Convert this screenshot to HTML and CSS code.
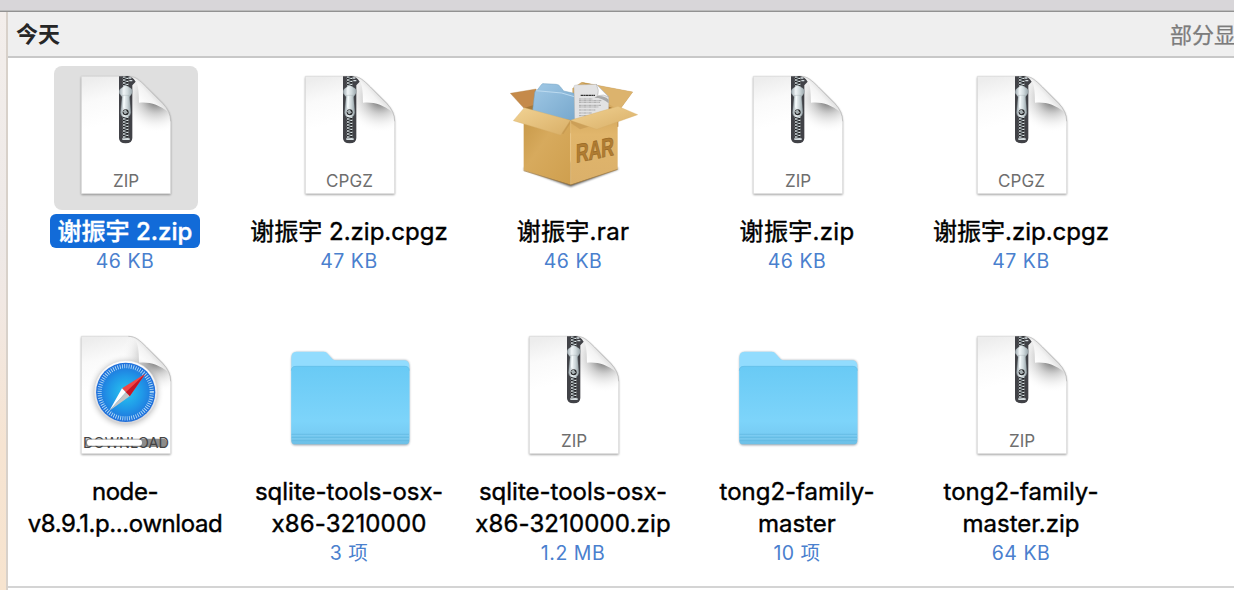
FILE: index.html
```html
<!DOCTYPE html>
<html lang="zh-CN">
<head>
<meta charset="utf-8">
<title>今天</title>
<link rel="stylesheet" href="styles.css">
</head>
<body>
<svg class="defs" aria-hidden="true">
  <defs>
    <linearGradient id="page" x1=".25" y1="0" x2=".45" y2="1"><stop offset="0" stop-color="#ededed"/><stop offset=".18" stop-color="#fafafa"/><stop offset=".4" stop-color="#fff"/></linearGradient>
    <radialGradient id="foldShade" gradientUnits="userSpaceOnUse" cx="318" cy="108" r="105"><stop offset="0" stop-color="#777"/><stop offset=".2" stop-color="#919191"/><stop offset=".45" stop-color="#c4c4c4" stop-opacity=".8"/><stop offset="1" stop-color="#fff" stop-opacity="0"/></radialGradient>
    <linearGradient id="curl" gradientUnits="userSpaceOnUse" x1="262" y1="115" x2="306" y2="76"><stop offset="0" stop-color="#fff"/><stop offset=".6" stop-color="#f3f3f3"/><stop offset="1" stop-color="#d5d5d5"/></linearGradient>
    <linearGradient id="metal" x1="0" x2="1"><stop offset="0" stop-color="#9aa6ac"/><stop offset=".35" stop-color="#f0f5f7"/><stop offset=".65" stop-color="#cfd9dc"/><stop offset="1" stop-color="#98a4a9"/></linearGradient>
    <pattern id="teeth" width="18" height="9" patternUnits="userSpaceOnUse" x="218" y="42"><path d="M0 1h8v4H0zM10 5h8v4h-8z" fill="#dce4e6"/><path d="M7 2h4v2H7zM7 6h4v2H7z" fill="#94a3a8"/></pattern>
    <linearGradient id="folderFront" x2="0" y2="1"><stop offset="0" stop-color="#69caf5"/><stop offset=".7" stop-color="#7dd4fa"/><stop offset=".86" stop-color="#78cdf4"/><stop offset="1" stop-color="#6dbfe6"/></linearGradient>
    <radialGradient id="compass" cx=".5" cy=".5" r=".55"><stop offset="0" stop-color="#27c5ef"/><stop offset=".5" stop-color="#2099e8"/><stop offset="1" stop-color="#2065d8"/></radialGradient>
    <linearGradient id="rim" x2="0" y2="1"><stop offset="0" stop-color="#fff"/><stop offset="1" stop-color="#d5d5d8"/></linearGradient>
    <linearGradient id="boxLeft" x2="1" y2="1"><stop offset="0" stop-color="#c79848"/><stop offset=".4" stop-color="#d7aa5d"/><stop offset="1" stop-color="#cf9f4e"/></linearGradient>
    <linearGradient id="boxRight" x2="0" y2="1"><stop offset="0" stop-color="#d3a65b"/><stop offset=".3" stop-color="#e1b66c"/><stop offset="1" stop-color="#dbb06a"/></linearGradient>
    <linearGradient id="flap" x2="1" y2="1"><stop offset="0" stop-color="#f1d293"/><stop offset="1" stop-color="#d9af67"/></linearGradient>
    <linearGradient id="blueFile" x2="1" y2="1"><stop offset="0" stop-color="#a1c9e6"/><stop offset="1" stop-color="#76a7cc"/></linearGradient>
    <filter id="soft" x="-20%" y="-20%" width="140%" height="140%"><feGaussianBlur stdDeviation="3"/></filter>

    <symbol id="doc" viewBox="0 0 144 144">
      <g transform="translate(-4 -4) scale(.33333)">
        <path d="M94 46H235C258 46 268 57 290 79L338 126Q362 151 362 180V398H94Z" fill="#000" opacity=".4" filter="url(#soft)"/>
        <path d="M94 43H235C256 43 270 56 289 75L338 124Q362 149 362 178V395H94Z" fill="url(#page)" stroke="#d3d3d3" stroke-width="1.5"/>
        <path d="M235 43C256 43 270 56 289 75L338 124Q361 149 361 178V225H220V43Z" fill="url(#foldShade)"/>
        <path d="M235 43C259 45 267 65 267 122C300 119 326 128 355 150Q350 136 338 124L289 75C270 56 256 43 235 43Z" fill="url(#curl)"/>
        <path d="M235 43C256 43 270 56 289 75L338 124Q362 149 362 178" fill="none" stroke="#b5b5b5" stroke-width="2"/>
      </g>
    </symbol>
    <symbol id="zipper" viewBox="0 0 144 144">
      <g transform="translate(-4 -4) scale(.33333)">
        <path d="M207 43H235Q247 44 257 59L247 70V228Q247 244 227 244Q207 244 207 228Z" fill="#414247"/>
        <rect x="218" y="43" width="18" height="188" fill="#202124"/>
        <rect x="218" y="43" width="18" height="188" fill="url(#teeth)"/>
        <path d="M236 46h8v4h-8zM238 54h9v4h-9zM217 229h22v5h-22z" fill="#d4dcdf"/>
        <path d="M218 76Q227 65 237 76Q250 81 246 94Q241 102 236 106H218Q214 102 208 94Q205 82 218 76Z" fill="url(#metal)" stroke="#9aa6ab"/>
        <path d="M217 100H238L242 151Q241 166 227 166Q212 166 212 151Z" fill="url(#metal)" stroke="#9aa6ab"/>
        <path d="M223 103L221 137" stroke="#f8ffff" stroke-width="3"/>
        <circle cx="227" cy="151" r="9" fill="#27292b"/>
        <path d="M220 148l7-4 4 7-6 5zM229 154l5-4" fill="#a3afb2" stroke="#dce3e5" stroke-width="1.5"/>
      </g>
    </symbol>
    <symbol id="zip" viewBox="0 0 144 144"><use href="#doc"/><use href="#zipper"/><text x="72" y="120.5" class="kind" textLength="26">ZIP</text></symbol>
    <symbol id="cpgz" viewBox="0 0 144 144"><use href="#doc"/><use href="#zipper"/><text x="71.5" y="120.5" class="kind" textLength="47">CPGZ</text></symbol>
    <symbol id="folder" viewBox="0 0 144 144">
      <g transform="translate(2 14) scale(.33333)">
        <path d="M35 55Q35 37 50 37H131Q139 37 144 44L160 61H376Q388 62 388 80V304Q388 316 376 316H46Q35 316 35 304Z" fill="#234" opacity=".45" filter="url(#soft)"/>
        <path d="M34 53Q34 35 49 35H131Q139 35 144 42L157 57Q160 61 168 61H374Q388 62 388 79V298H34Z" fill="#92dcfe"/>
        <path d="M34 92Q34 78 48 78H374Q388 78 388 92V302Q388 313 376 313H45Q34 313 34 302Z" fill="url(#folderFront)"/>
        <path d="M34 92Q34 79 48 79H374Q388 79 388 92" fill="none" stroke="#65bde5" stroke-width="2"/>
        <path d="M35 283H387M35 292H387M35 302H387" stroke="#5eb4dc" stroke-width="2"/>
        <path d="M35 286H387M35 296H387" stroke="#83cdef" stroke-width="1.5"/>
      </g>
    </symbol>
  </defs>
</svg>
<div class="toolbar"></div>
<div class="window">
  <div class="edge"></div>
  <main class="pane">
    <header class="group"><h1>今天</h1><span class="more">部分显</span></header>
    <section class="files">
      <article class="file selected"><svg class="icon"><use href="#zip"/></svg><div class="name"><span>谢振宇 2.zip</span></div><div class="info">46 KB</div></article>
      <article class="file"><svg class="icon"><use href="#cpgz"/></svg><div class="name"><span>谢振宇 2.zip.cpgz</span></div><div class="info">47 KB</div></article>
      <article class="file">
        <svg class="icon" viewBox="0 0 144 144"><g transform="translate(-2 4) scale(.33333)">
          <path d="M70 298L212 350L356 297L320 275H100Z" fill="#000" opacity=".65" filter="url(#soft)"/>
          <path d="M31 70L108 57L125 115H72Z" fill="#c58a4a" stroke="#b18043"/>
          <path d="M245 37L398 66L357 122H218V55Z" fill="#d5aa61" stroke="#b58c49"/>
          <path d="M278 44L398 66L357 121L315 95Z" fill="#dcb36d"/>
          <path d="M245 37L290 45L285 60Z" fill="#c3984f"/>
          <path d="M72 114L218 70L355 121V170L212 190L72 155Z" fill="#a77837"/>
          <path d="M104 69Q105 60 112 60L124 44Q127 40 133 41L169 43Q177 44 181 50L191 63L222 70L228 154L97 130Z" fill="url(#blueFile)" stroke="#6f9fc0" stroke-width="1.5"/>
          <path d="M108 62L185 69L223 80" fill="none" stroke="#bddbf0" stroke-width="3"/>
          <path d="M222 50Q222 45 228 45L289 43L326 80V139L280 160L224 147Z" fill="#e2e2e3" stroke="#aaa"/>
          <path d="M289 43Q299 61 293 77Q311 71 326 81Z" fill="#fff" stroke="#888"/>
          <path d="M292 78Q313 76 326 89V100Q308 83 283 83Z" fill="#a8a8a8"/>
          <path d="M242 76H285" stroke="#333" stroke-width="4" stroke-dasharray="7 1"/>
          <path d="M237 87H278M237 92H304M237 97H300M237 106H303M237 111H295M237 120H286M237 129H275M237 137H286" stroke="#8b8b8b" stroke-width="2" stroke-dasharray="8 2 4 1"/>
          <path d="M71 139L212 154V344L71 301Z" fill="url(#boxLeft)"/>
          <path d="M212 154L353 128V298L212 344Z" fill="url(#boxRight)"/>
          <path d="M71 148L190 192L212 159L240 178L353 145V127L212 150L71 126Z" fill="#b18441" opacity=".35"/>
          <path d="M73 113L211 151L182 195L40 152Z" fill="url(#flap)" stroke="#d5ad68"/>
          <path d="M211 151L354 109L413 134L290 178Z" fill="url(#flap)" stroke="#d3ac67"/>
          <path d="M212 153V343" stroke="#edc989" stroke-width="2"/>
          <path d="M71 302L212 345L353 298" fill="none" stroke="#a77b38" stroke-width="2"/>
          <text class="rar" transform="matrix(1 -.2 0 1.15 228 278)" textLength="114" lengthAdjust="spacingAndGlyphs">RAR</text>
        </g></svg>
        <div class="name"><span class="wide">谢振宇.rar</span></div><div class="info">46 KB</div></article>
      <article class="file"><svg class="icon"><use href="#zip"/></svg><div class="name"><span class="wide">谢振宇.zip</span></div><div class="info">46 KB</div></article>
      <article class="file"><svg class="icon"><use href="#cpgz"/></svg><div class="name"><span>谢振宇.zip.cpgz</span></div><div class="info">47 KB</div></article>

      <article class="file">
        <svg class="icon" viewBox="0 0 144 144"><use href="#doc"/>
          <circle cx="71.7" cy="67" r="31.5" fill="#000" opacity=".3" filter="url(#soft)"/>
          <circle cx="71.7" cy="66.3" r="31.7" fill="url(#rim)" stroke="#d4d4d6" stroke-width=".5"/>
          <circle cx="71.7" cy="66.3" r="29.6" fill="url(#compass)"/>
          <circle cx="71.7" cy="66.3" r="26.1" fill="none" stroke="#d4effc" stroke-width="4.2" stroke-dasharray=".85 1.428" opacity=".85"/>
          <path d="M91.3 47.7L68 62.2L75.7 70.3Z" fill="#f04747"/><path d="M91.3 47.7L71.8 66.2L75.7 70.3Z" fill="#c51624"/>
          <path d="M55.3 84.7L68 62.2L71.8 66.2Z" fill="#fff"/><path d="M55.3 84.7L71.8 66.2L75.7 70.3Z" fill="#c5c5c5"/>
          <rect x="31" y="112.8" width="82" height="8.2" rx="4" fill="#8c8c8c"/>
          <text x="72" y="121.5" class="download" textLength="86" lengthAdjust="spacingAndGlyphs">DOWNLOAD</text>
          <rect x="33" y="113.6" width="55" height="6.2" rx="3.1" fill="#fff"/>
        </svg>
        <div class="name"><span class="slim">node-</span><span class="slim">v8.9.1.p...ownload</span></div></article>
      <article class="file"><svg class="icon"><use href="#folder"/></svg><div class="name"><span>sqlite-tools-osx-</span><span class="num">x86-3210000</span></div><div class="info">3 项</div></article>
      <article class="file"><svg class="icon"><use href="#zip"/></svg><div class="name"><span>sqlite-tools-osx-</span><span class="num">x86-3210000.zip</span></div><div class="info">1.2 MB</div></article>
      <article class="file"><svg class="icon"><use href="#folder"/></svg><div class="name"><span>tong2-family-</span><span>master</span></div><div class="info">10 项</div></article>
      <article class="file"><svg class="icon"><use href="#zip"/></svg><div class="name"><span>tong2-family-</span><span>master.zip</span></div><div class="info">64 KB</div></article>
    </section>
  </main>
</div>
</body>
</html>
```
FILE: styles.css
```css
* { box-sizing: border-box; }
body { margin: 0; width: 1234px; height: 590px; overflow: hidden; background: #fff; font-family: Inter, "Noto Sans CJK SC", sans-serif; display: flex; flex-direction: column; }
.defs { position: absolute; width: 0; height: 0; }
.toolbar { height: 12px; flex: none; background: #d8d6d9; border-bottom: 1px solid #929292; box-shadow: inset 0 -1px #bbb; }
.window { display: flex; flex: 1; min-height: 0; }
.edge { width: 8px; flex: none; background: linear-gradient(#f3eeeb, #eee9e7 40%, #f1e8e3 50%, #f6e4d2 75%, #f7e4cf); border-right: 2px solid #d8d1ca; }
.pane { flex: 1; min-width: 0; }
.group { height: 46px; background: #efefef; border-bottom: 2px solid #c8c8c8; display: flex; justify-content: space-between; padding-left: 8px; overflow: hidden; }
h1 { margin: 0; font-size: 22px; line-height: 44px; font-weight: 700; color: #262626; }
.more { font-size: 22px; line-height: 46px; color: #7c7c7c; white-space: nowrap; width: 64px; -webkit-text-stroke: .25px; }
.files { height: 530px; padding: 8px 0 0 6px; display: grid; grid-template-columns: repeat(5, 224px); grid-template-rows: 260px 260px; border-bottom: 2px solid #d4d4d4; }
.file { display: flex; flex-direction: column; align-items: center; }
.icon { width: 144px; height: 144px; flex: none; border-radius: 8px; }
.selected .icon { background: #dfdfdf; }
.name { margin: 4px 2px 0 0; padding-top: 2px; font-size: 24px; line-height: 32px; color: #000; display: flex; flex-direction: column; align-items: center; white-space: nowrap; border-radius: 6px; -webkit-text-stroke: .4px; }
.wide { letter-spacing: .3px; }
.slim { letter-spacing: -.42px; }
.num { letter-spacing: .14px; }
.selected .name { color: #fff; background: #126bd8; width: 150px; height: 34px; font-weight: 500; }
.info { margin: -1px 2px 0 0; font-size: 19.5px; line-height: 28px; color: #4a80ce; letter-spacing: .5px; }
.kind { font: 17px Inter, sans-serif; fill: #6e6e6e; text-anchor: middle; }
.download { font: 15px Inter, sans-serif; fill: #444; text-anchor: middle; }
.rar { font: bold 68px "Liberation Sans", sans-serif; fill: #b17d32; stroke: #986826; stroke-width: 2px; }
```
